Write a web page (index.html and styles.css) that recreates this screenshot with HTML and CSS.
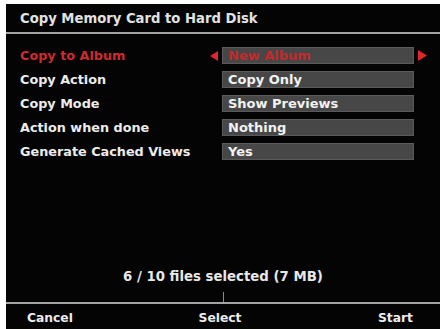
FILE: index.html
```html
<!DOCTYPE html>
<html>
<head>
<meta charset="utf-8">
<link rel="stylesheet" href="styles.css">
</head>
<body>
<div class="screen">
  <div class="header">Copy Memory Card to Hard Disk</div>
  <div class="options">
    <div class="row active">
      <span class="label">Copy to Album</span>
      <span class="arrow left"><svg width="8" height="10" viewBox="0 0 8 10"><polygon points="8,0 0,5 8,10" fill="#e3262b"/></svg></span>
      <span class="value">New Album</span>
      <span class="arrow right"><svg width="9" height="11" viewBox="0 0 9 11"><polygon points="0,0 9,5.5 0,11" fill="#e3262b"/></svg></span>
    </div>
    <div class="row">
      <span class="label">Copy Action</span>
      <span class="arrow left"></span>
      <span class="value">Copy Only</span>
      <span class="arrow right"></span>
    </div>
    <div class="row">
      <span class="label">Copy Mode</span>
      <span class="arrow left"></span>
      <span class="value">Show Previews</span>
      <span class="arrow right"></span>
    </div>
    <div class="row">
      <span class="label">Action when done</span>
      <span class="arrow left"></span>
      <span class="value">Nothing</span>
      <span class="arrow right"></span>
    </div>
    <div class="row">
      <span class="label">Generate Cached Views</span>
      <span class="arrow left"></span>
      <span class="value">Yes</span>
      <span class="arrow right"></span>
    </div>
  </div>
  <div class="status">6 / 10 files selected (7 MB)</div>
  <div class="tick"></div>
  <div class="footer">
    <span class="btn btn-left">Cancel</span>
    <span class="btn btn-mid">Select</span>
    <span class="btn btn-right">Start</span>
  </div>
</div>
</body>
</html>
```
FILE: styles.css
```css
html, body {
  margin: 0;
  padding: 0;
  background: #ffffff;
}
body {
  width: 440px;
  height: 329px;
  overflow: hidden;
}
.screen {
  margin-left: 6px;
  margin-top: 4px;
  width: 434px;
  height: 325px;
  background: #040404;
  display: flex;
  flex-direction: column;
  font-family: "DejaVu Sans", sans-serif;
  font-weight: bold;
  font-size: 12.8px;
  color: #ececec;
}
.header {
  height: 28px;
  line-height: 29px;
  padding-left: 14px;
  font-size: 13.2px;
  color: #e2e2e2;
  border-bottom: 2px solid #a4a4a4;
}
.options {
  margin-top: 13px;
  display: flex;
  flex-direction: column;
  gap: 7px;
}
.row {
  display: grid;
  grid-template-columns: 190px 12px 192px 13px;
  align-items: center;
  height: 17px;
  padding-left: 14px;
}
.label {
  color: #ececec;
  white-space: nowrap;
}
.arrow {
  display: flex;
  align-items: center;
}
.arrow.left {
  justify-content: flex-start;
}
.arrow.right {
  justify-content: flex-end;
}
.value {
  height: 15px;
  line-height: 15px;
  background: #474747;
  border: 1px solid #5a5a5a;
  padding-left: 5px;
  color: #f2f2f2;
  font-size: 13px;
}
.row.active .label {
  color: #cf2a2e;
}
.row.active .value {
  color: #c22a2c;
}
.status {
  margin-top: auto;
  height: 26px;
  line-height: 30px;
  text-align: center;
  color: #e8e8e8;
  font-size: 13.3px;
}
.tick {
  align-self: center;
  width: 1px;
  height: 10px;
  margin-top: 4px;
  background: #8a8a8a;
}
.footer {
  height: 22px;
  border-top: 2px solid #a4a4a4;
  padding-top: 3px;
  display: grid;
  grid-template-columns: 1fr auto 1fr;
  align-items: center;
  padding-left: 21px;
  padding-right: 27px;
  color: #ececec;
  font-size: 12.3px;
}
.btn-mid {
  text-align: center;
}
.btn-right {
  text-align: right;
}
```
